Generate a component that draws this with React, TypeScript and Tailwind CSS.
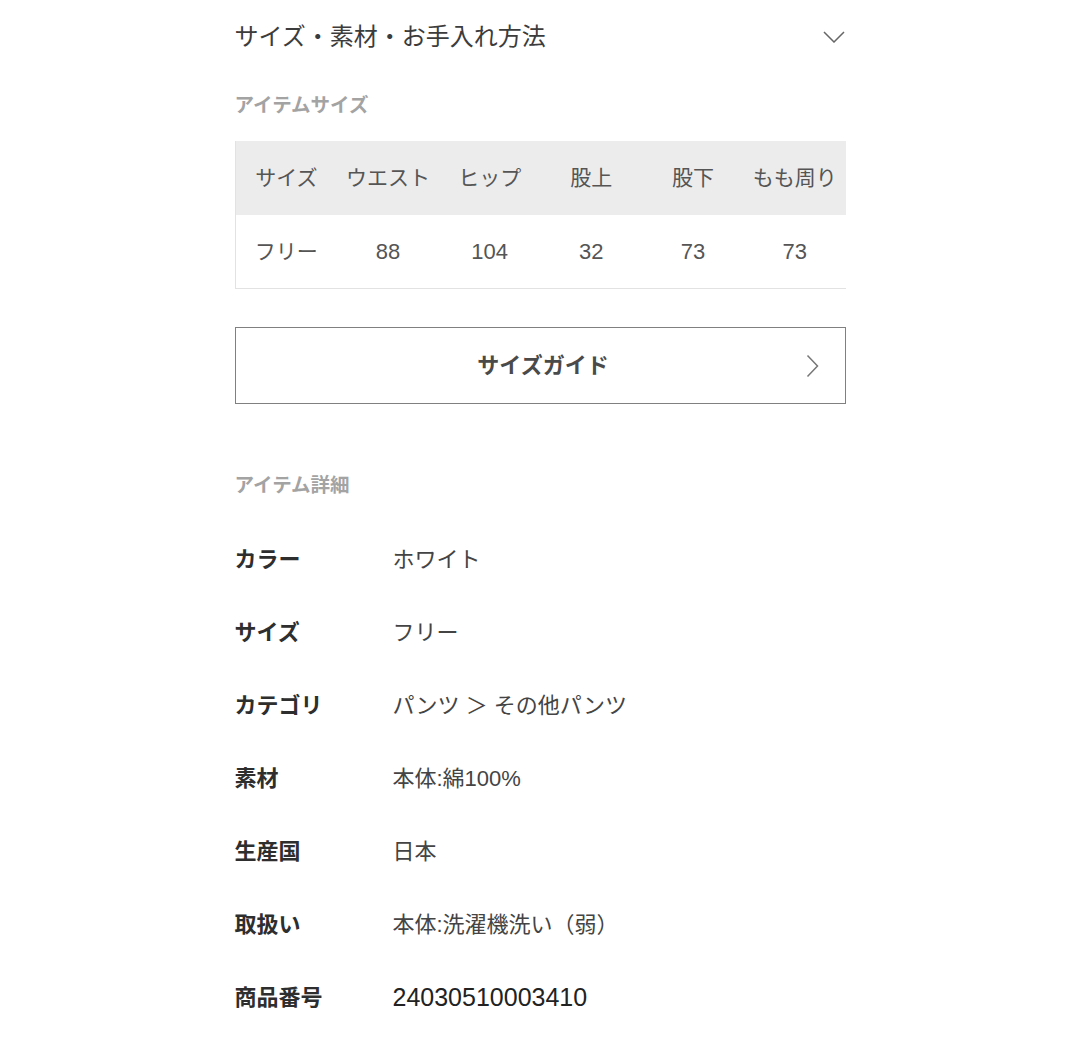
import React from "react";

const sizeCols = ["サイズ", "ウエスト", "ヒップ", "股上", "股下", "もも周り"];
const sizeVals = ["フリー", "88", "104", "32", "73", "73"];

const details: [string, string][] = [
    ["カラー", "ホワイト"],
    ["サイズ", "フリー"],
    ["カテゴリ", "パンツ ＞ その他パンツ"],
    ["素材", "本体:綿100%"],
    ["生産国", "日本"],
    ["取扱い", "本体:洗濯機洗い（弱）"],
    ["商品番号", "24030510003410"],
];

export default function App() {
    return (
        <div className="min-h-[1050px] w-full bg-white font-['Liberation_Sans','Noto_Sans_CJK_JP',sans-serif]">
            <div className="mx-auto flex w-[611px] flex-col">
                {/* Accordion header */}
                <div className="flex h-[74px] items-center justify-between">
                    <span className="text-[24px] text-[#3c3c3c]">サイズ・素材・お手入れ方法</span>
                    <svg width="22" height="12" viewBox="0 0 22 12" fill="none" className="mr-[1px]">
                        <path d="M1 1l10 10L21 1" stroke="#666" strokeWidth="1.5" />
                    </svg>
                </div>

                {/* Item size */}
                <div className="flex h-[60px] items-center pt-[4px] text-[19.5px] font-bold text-[#a3a3a3]">アイテムサイズ</div>

                <div className="mt-[7px] border-b border-l border-[#e2e2e2]">
                    <div className="grid h-[74px] grid-cols-6 items-center bg-[#ececec] text-[21px] text-[#555]">
                        {sizeCols.map((c) => (
                            <div key={c} className="text-center">{c}</div>
                        ))}
                    </div>
                    <div className="grid h-[73px] grid-cols-6 items-center text-[22px] text-[#555]">
                        {sizeVals.map((v, i) => (
                            <div key={i} className={i === 0 ? "text-center text-[21px]" : "text-center"}>{v}</div>
                        ))}
                    </div>
                </div>

                {/* Size guide button */}
                <button className="relative mt-[38px] flex h-[77px] items-center justify-center border-[1.5px] border-[#808080] bg-white">
                    <span className="ml-[6px] text-[22px] font-bold text-[#4a4a4a]">サイズガイド</span>
                    <svg width="14" height="24" viewBox="0 0 14 24" fill="none" className="absolute right-[25px] top-[26px]">
                        <path d="M1.5 1.5l10 10.5-10 10.5" stroke="#777" strokeWidth="1.5" />
                    </svg>
                </button>

                {/* Item details */}
                <div className="mt-[51px] flex h-[60px] items-center pt-[2px] text-[19.5px] font-bold text-[#a3a3a3]">アイテム詳細</div>

                <div className="mt-[8px] flex flex-col">
                    {details.map(([label, value]) => (
                        <div key={label} className="flex h-[73px] items-center">
                            <div className="w-[158px] text-[22px] font-bold text-[#2e2e2e]">{label}</div>
                            <div className={label === "商品番号" ? "text-[25px] text-[#222]" : "text-[22px] text-[#444]"}>{value}</div>
                        </div>
                    ))}
                </div>
            </div>
        </div>
    );
}
